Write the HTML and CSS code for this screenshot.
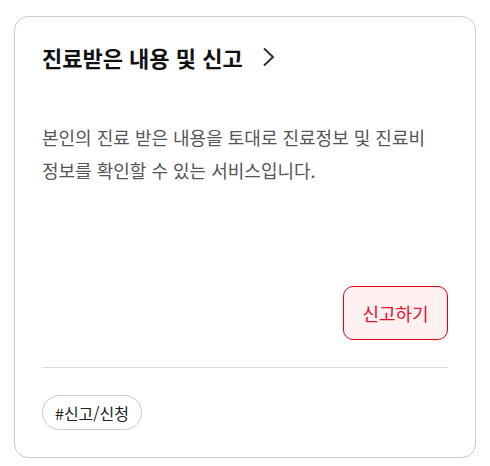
FILE: index.html
```html
<!DOCTYPE html>
<html lang="ko">
<head>
<meta charset="utf-8">
<link rel="stylesheet" href="styles.css">
</head>
<body>
<div class="card">
  <a class="title" href="#">
    <span>진료받은 내용 및 신고</span>
    <svg class="chev" width="14" height="20" viewBox="0 0 14 20"><path d="M2 1.5 L11 10 L2 18.5" fill="none" stroke="#333" stroke-width="2"/></svg>
  </a>
  <p class="desc">본인의 진료 받은 내용을 토대로 진료정보 및 진료비 정보를 확인할 수 있는 서비스입니다.</p>
  <div class="actions">
    <button class="btn">신고하기</button>
  </div>
  <hr class="divider">
  <div class="tags">
    <span class="tag">#신고/신청</span>
  </div>
</div>
</body>
</html>
```
FILE: styles.css
```css
html, body {
  margin: 0;
  padding: 0;
  background: #fff;
}
body {
  padding: 16px 14px 8px 14px;
  font-family: "Noto Sans CJK KR", "Noto Sans", sans-serif;
}
.card {
  box-sizing: border-box;
  width: 462px;
  height: 442px;
  border: 1px solid #cccccc;
  border-radius: 14px;
  padding: 25px 27px 27px 27px;
  display: flex;
  flex-direction: column;
}
.title {
  display: flex;
  align-items: center;
  gap: 19px;
  text-decoration: none;
  color: #111;
  font-size: 22px;
  font-weight: 700;
  line-height: 30px;
  height: 30px;
}
.chev {
  display: block;
}
.desc {
  margin: 49px 0 0 0;
  font-size: 18px;
  line-height: 33px;
  color: #555;
  word-break: keep-all;
  flex: 1;
}
.actions {
  display: flex;
  justify-content: flex-end;
}
.btn {
  width: 105px;
  height: 54px;
  border: 1px solid #e60012;
  border-radius: 10px;
  background: #fff0f1;
  color: #e8102a;
  font-family: inherit;
  font-size: 18px;
  padding: 0;
}
.divider {
  border: none;
  border-top: 1px solid #dddddd;
  margin: 27px 0 0 0;
  height: 0;
}
.tags {
  display: flex;
  margin-top: 27px;
}
.tag {
  box-sizing: border-box;
  height: 35px;
  padding: 0 12px;
  border: 1px solid #cccccc;
  border-radius: 18px;
  display: inline-flex;
  align-items: center;
  font-size: 16px;
  color: #222;
}
```
